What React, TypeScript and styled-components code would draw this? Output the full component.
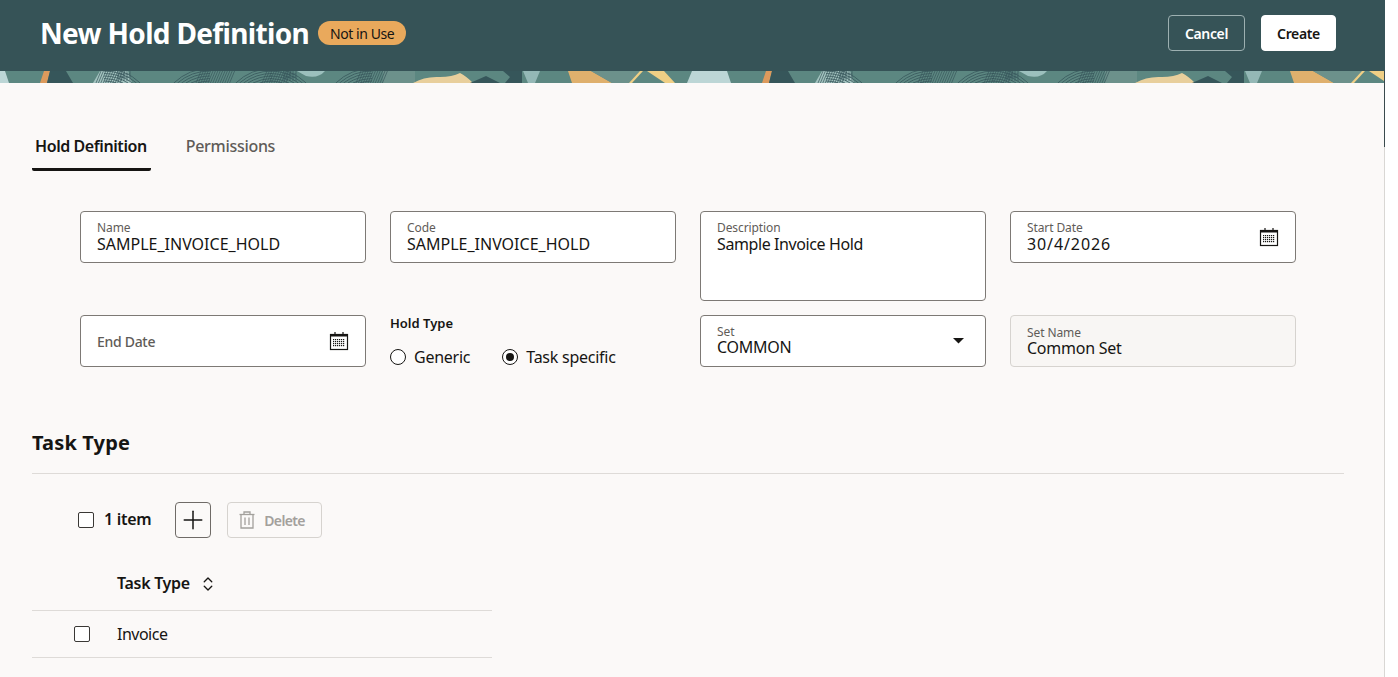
import { createGlobalStyle, styled } from 'styled-components';
import { ChevronsUpDown, Plus } from 'lucide-react';

const GlobalStyle = createGlobalStyle`
  html, body {
    margin: 0;
    background: #ffffff;
  }
  body {
    font-family: 'Noto Sans', 'Liberation Sans', sans-serif;
    color: #161513;
  }
`;

const Page = styled.div`
  position: relative;
  width: 1385px;
  height: 677px;
  overflow: hidden;
  background: #fbf9f8;
`;

const ScrollThumb = styled.div`
  position: absolute;
  top: 71px;
  right: 0;
  width: 1px;
  height: 76px;
  background: #3a4a4d;
`;

const ScrollTrack = styled.div`
  position: absolute;
  top: 147px;
  right: 0;
  bottom: 0;
  width: 1px;
  background: #d9d7d4;
`;

const Header = styled.header`
  height: 71px;
  box-sizing: border-box;
  padding: 15px 49px 0 40px;
  display: flex;
  justify-content: space-between;
  align-items: flex-start;
  background: #365357;
`;

const TitleGroup = styled.div`
  display: flex;
  align-items: center;
  gap: 9px;
  height: 36px;
`;

const Title = styled.h1`
  margin: 0;
  font-size: 28px;
  line-height: 36px;
  font-weight: 700;
  color: #ffffff;
  letter-spacing: -0.66px;
`;

const Badge = styled.span`
  height: 24px;
  padding: 0 12px;
  display: flex;
  align-items: center;
  border-radius: 12px;
  background: #e9a95c;
  color: #161513;
  font-size: 14px;
  letter-spacing: -0.45px;
`;

const HeaderActions = styled.div`
  display: flex;
  gap: 16px;
`;

const HeaderButton = styled.button<{ $primary?: boolean }>`
  height: 36px;
  width: ${(p) => (p.$primary ? '75px' : '77px')};
  padding: 0;
  border-radius: 4px;
  border: 1px solid ${(p) => (p.$primary ? '#ffffff' : '#9db0b1')};
  background: ${(p) => (p.$primary ? '#ffffff' : 'transparent')};
  color: ${(p) => (p.$primary ? '#161513' : '#ffffff')};
  font-family: inherit;
  font-size: 14px;
  font-weight: 600;
  letter-spacing: -0.35px;
`;

const BannerStrip = styled.svg`
  display: block;
  width: 100%;
  height: 12px;
`;

const TabBar = styled.nav`
  display: flex;
  gap: 32px;
  margin: 38px 0 0 32px;
`;

const Tab = styled.div<{ $active?: boolean }>`
  height: 50px;
  box-sizing: border-box;
  padding: 2px 4px 0 3px;
  display: flex;
  align-items: center;
  font-size: 16px;
  font-weight: ${(p) => (p.$active ? 600 : 500)};
  letter-spacing: ${(p) => (p.$active ? '-0.42px' : '-0.3px')};
  color: ${(p) => (p.$active ? '#161513' : '#5f5c58')};
  border-bottom: 3px solid ${(p) => (p.$active ? '#161513' : 'transparent')};
  border-bottom-left-radius: 2px;
  border-bottom-right-radius: 2px;
`;

const FormGrid = styled.section`
  display: grid;
  grid-template-columns: repeat(4, 286px);
  column-gap: 24px;
  row-gap: 14px;
  margin: 40px 0 0 80px;
  align-items: start;
`;

const Field = styled.div<{ $tall?: boolean; $disabled?: boolean }>`
  position: relative;
  height: ${(p) => (p.$tall ? '90px' : '52px')};
  box-sizing: border-box;
  padding: ${(p) => (p.$disabled ? '9px' : '8px')} 16px 0;
  border-radius: 4px;
  border: 1px solid ${(p) => (p.$disabled ? '#d6d3cf' : '#7d7975')};
  background: ${(p) => (p.$disabled ? '#f8f6f4' : '#ffffff')};
  display: flex;
  flex-direction: column;
`;

const FieldLabel = styled.span`
  font-size: 12px;
  line-height: 16px;
  color: #5f5c58;
  letter-spacing: -0.1px;
`;

const FieldValue = styled.span<{ $spacing?: number; $lift?: boolean }>`
  margin-top: ${(p) => (p.$lift ? '-1px' : '0')};
  font-size: 16px;
  line-height: 16px;
  color: #161513;
  letter-spacing: ${(p) => p.$spacing ?? -0.25}px;
`;

const Placeholder = styled.span`
  height: 100%;
  display: flex;
  align-items: center;
  margin-top: -4px;
  font-size: 14px;
  font-weight: 500;
  color: #5f5c58;
  letter-spacing: -0.3px;
`;

const FieldIcon = styled.span<{ $right?: number }>`
  position: absolute;
  right: ${(p) => p.$right ?? 15}px;
  top: 50%;
  transform: translateY(-50%);
  display: flex;
`;

const RadioField = styled.div`
  height: 52px;
  position: relative;
`;

const GroupLabel = styled.div`
  font-size: 13px;
  line-height: 16px;
  font-weight: 600;
  letter-spacing: 0;
`;

const RadioRow = styled.div`
  display: flex;
  gap: 32px;
  margin-top: 14px;
`;

const RadioOption = styled.label`
  display: flex;
  align-items: center;
  gap: 8px;
  height: 24px;
  font-size: 16px;
  letter-spacing: -0.25px;
`;

const RadioDot = styled.span<{ $checked?: boolean }>`
  width: 16px;
  height: 16px;
  box-sizing: border-box;
  border-radius: 50%;
  border: 1px solid #161513;
  background: #ffffff;
  display: flex;
  align-items: center;
  justify-content: center;
  &::after {
    content: '';
    width: 8px;
    height: 8px;
    border-radius: 50%;
    background: ${(p) => (p.$checked ? '#161513' : 'transparent')};
  }
`;

const Section = styled.section`
  margin: 62px 41px 0 32px;
`;

const SectionTitle = styled.h2`
  margin: 0;
  padding-bottom: 16px;
  font-size: 20px;
  line-height: 28px;
  font-weight: 700;
  letter-spacing: 0.15px;
  border-bottom: 1px solid #dedbd8;
`;

const Toolbar = styled.div`
  display: flex;
  align-items: center;
  margin: 28px 0 0 46px;
  height: 36px;
`;

const Checkbox = styled.span`
  display: block;
  flex: none;
  width: 16px;
  height: 16px;
  box-sizing: border-box;
  border-radius: 2px;
  border: 1.5px solid #3a3835;
  background: #ffffff;
`;

const ItemCount = styled.span`
  margin: 0 24px 0 10px;
  padding-bottom: 2px;
  font-size: 16px;
  font-weight: 600;
  letter-spacing: -0.3px;
`;

const IconButton = styled.button`
  width: 36px;
  height: 36px;
  padding: 0;
  display: flex;
  align-items: center;
  justify-content: center;
  border-radius: 4px;
  border: 1px solid #6f6b67;
  background: transparent;
  color: #161513;
`;

const DisabledButton = styled.button`
  width: 95px;
  height: 36px;
  margin-left: 16px;
  padding: 0 0 0 11px;
  box-sizing: border-box;
  display: flex;
  align-items: center;
  gap: 9px;
  border-radius: 4px;
  border: 1px solid #d6d3cf;
  background: transparent;
  color: #a3a09c;
  font-family: inherit;
  font-size: 14px;
  font-weight: 600;
  letter-spacing: -0.65px;
`;

const Table = styled.div`
  width: 460px;
`;

const HeaderRow = styled.div`
  height: 73px;
  box-sizing: border-box;
  padding: 30px 0 0 85px;
  display: flex;
  align-items: flex-start;
  gap: 9px;
  border-bottom: 1px solid #dedbd8;
`;

const HeaderCell = styled.span`
  font-size: 16px;
  line-height: 30px;
  font-weight: 600;
  letter-spacing: -0.3px;
`;

const SortIcon = styled.span`
  height: 31px;
  display: flex;
  align-items: center;
  color: #161513;
`;

const BodyRow = styled.div`
  height: 47px;
  box-sizing: border-box;
  display: flex;
  align-items: center;
  padding-left: 42px;
  border-bottom: 1px solid #dedbd8;
`;

const BodyCell = styled.span`
  margin-left: 27px;
  font-size: 16px;
  letter-spacing: -0.5px;
`;

const hatchLines = (from: number, to: number, step: number) => {
  const lines = [];
  for (let x = from; x < to; x += step) lines.push(x);
  return lines;
};

const ARC_CY = 50;
const ARC_RADII = [40, 42.5, 45, 47.5, 50, 52.5];

// quarter of a ring, from the bottom edge of the strip up to its crown
const arcPath = (cx: number, r: number, side: 'left' | 'right') => {
  const dx = Math.sqrt(r * r - (ARC_CY - 12) * (ARC_CY - 12));
  const x0 = side === 'left' ? cx - dx : cx + dx;
  const sweep = side === 'left' ? 1 : 0;
  return `M${x0.toFixed(1)} 12A${r} ${r} 0 0 ${sweep} ${cx} ${ARC_CY - r}`;
};

function BannerTile() {
  return (
    <>
      <rect width="722" height="12" fill="#5c8781" />
      <polygon points="692,0 722,0 722,12 687,12" fill="#bcd6d6" />
      <polygon points="0,0 5,0 9,12 0,12" fill="#bcd6d6" />
      <polygon points="44,0 50,0 47,12 40,12" fill="#dc9a5c" />
      <polygon points="50,0 66,0 73,12 47,12" fill="#36565a" />
      <polygon points="100,0 128,0 132,12 93,12" fill="#a3c3bf" />
      <path d="M297,0 H325 Q318,8 306,5 Z" fill="#9cc0bd" />
      <rect x="383" y="0" width="32" height="12" fill="#6c918b" />
      <path d="M413,12 Q425,5 440,6 Q452,6 460,2 Q466,5 473,12 Z" fill="#e8cf9c" />
      <path d="M470,12 L486,5 L500,12 Z" fill="#36565a" />
      <polygon points="503,0 522,0 522,12 505,12 510,6" fill="#36565a" />
      <polygon points="523,0 540,0 535,12 528,12" fill="#94b8b6" />
      <polygon points="568,0 591,0 612,12 572,12" fill="#dfb06d" />
      <polygon points="591,0 642,0 630,12 612,12" fill="#6c918b" />
      <polygon points="640,0 643,0 632,12 629,12" fill="#efcf85" />
      <polygon points="647,0 664,0 675,12 665,12" fill="#efcf85" />
      {[...hatchLines(96, 122, 2.4), ...hatchLines(196, 232, 2.4), ...hatchLines(262, 288, 2.4), ...hatchLines(356, 384, 2.4)].map((x) => (
        <line key={x} x1={x + 5} y1="0" x2={x} y2="12" stroke="#36565a" strokeWidth="0.7" />
      ))}
      {[118, 284].map((gx) =>
        [0, 3, 6, 9, 12].map((o) => (
          <line key={`${gx}-${o}`} x1={gx + o} y1="0" x2={gx + o} y2="10" stroke="#36565a" strokeWidth="0.7" />
        )),
      )}
      <path d="M118 3H130M118 6H130M284 3H296M284 6H296" stroke="#36565a" strokeWidth="0.7" />
      {[210, 272, 372].map((cx) =>
        ARC_RADII.map((r) => (
          <path key={`${cx}-${r}`} d={arcPath(cx, r, 'left')} fill="none" stroke="#36565a" strokeWidth="0.8" />
        )),
      )}
      {[104, 270].map((cx) =>
        ARC_RADII.map((r) => (
          <path key={`${cx}-${r}`} d={arcPath(cx, r, 'right')} fill="none" stroke="#36565a" strokeWidth="0.8" />
        )),
      )}
    </>
  );
}

function Banner() {
  return (
    <BannerStrip aria-hidden="true">
      <defs>
        <pattern id="holdBanner" width="722" height="12" patternUnits="userSpaceOnUse">
          <BannerTile />
        </pattern>
      </defs>
      <rect width="100%" height="12" fill="url(#holdBanner)" />
    </BannerStrip>
  );
}

function CalendarIcon() {
  const dots = [];
  for (let row = 0; row < 4; row++) {
    for (let col = 0; col < 6; col++) {
      dots.push(<rect key={`${row}-${col}`} x={5 + col * 2} y={9 + row * 2} width="1.2" height="1.2" fill="#161513" />);
    }
  }
  return (
    <svg width="22" height="22" viewBox="0 0 22 22" fill="none">
      <rect x="2.5" y="4.5" width="17" height="15" stroke="#161513" strokeWidth="1.2" />
      <line x1="2.5" y1="5.5" x2="19.5" y2="5.5" stroke="#161513" strokeWidth="2" />
      <line x1="7" y1="2" x2="7" y2="6" stroke="#161513" strokeWidth="1.2" />
      <line x1="15" y1="2" x2="15" y2="6" stroke="#161513" strokeWidth="1.2" />
      {dots}
    </svg>
  );
}

function CaretIcon() {
  return (
    <svg width="11" height="6" viewBox="0 0 11 6">
      <polygon points="0,0 11,0 5.5,5.5" fill="#161513" />
    </svg>
  );
}

function TrashIcon() {
  return (
    <svg width="16" height="18" viewBox="0 0 16 18" fill="none" stroke="#a3a09c" strokeWidth="1.3">
      <path d="M0.5 3.5H15.5" />
      <path d="M5 3.5V1H11V3.5" />
      <path d="M2 3.5V17H14V3.5" />
      <path d="M6 6.5V14" />
      <path d="M10 6.5V14" />
    </svg>
  );
}

export default function App() {
  return (
    <>
      <GlobalStyle />
      <Page>
        <Header>
          <TitleGroup>
            <Title>New Hold Definition</Title>
            <Badge>Not in Use</Badge>
          </TitleGroup>
          <HeaderActions>
            <HeaderButton>Cancel</HeaderButton>
            <HeaderButton $primary>Create</HeaderButton>
          </HeaderActions>
        </Header>
        <Banner />
        <TabBar>
          <Tab $active>Hold Definition</Tab>
          <Tab>Permissions</Tab>
        </TabBar>
        <FormGrid>
          <Field>
            <FieldLabel>Name</FieldLabel>
            <FieldValue $spacing={0}>SAMPLE_INVOICE_HOLD</FieldValue>
          </Field>
          <Field>
            <FieldLabel>Code</FieldLabel>
            <FieldValue $spacing={0}>SAMPLE_INVOICE_HOLD</FieldValue>
          </Field>
          <Field $tall>
            <FieldLabel>Description</FieldLabel>
            <FieldValue $spacing={-0.4}>Sample Invoice Hold</FieldValue>
          </Field>
          <Field>
            <FieldLabel>Start Date</FieldLabel>
            <FieldValue $spacing={0.9}>30/4/2026</FieldValue>
            <FieldIcon>
              <CalendarIcon />
            </FieldIcon>
          </Field>
          <Field>
            <Placeholder>End Date</Placeholder>
            <FieldIcon>
              <CalendarIcon />
            </FieldIcon>
          </Field>
          <RadioField>
            <GroupLabel>Hold Type</GroupLabel>
            <RadioRow>
              <RadioOption>
                <RadioDot />
                Generic
              </RadioOption>
              <RadioOption>
                <RadioDot $checked />
                Task specific
              </RadioOption>
            </RadioRow>
          </RadioField>
          <Field>
            <FieldLabel>Set</FieldLabel>
            <FieldValue $lift>COMMON</FieldValue>
            <FieldIcon $right={21}>
              <CaretIcon />
            </FieldIcon>
          </Field>
          <Field $disabled>
            <FieldLabel>Set Name</FieldLabel>
            <FieldValue $lift>Common Set</FieldValue>
          </Field>
        </FormGrid>
        <Section>
          <SectionTitle>Task Type</SectionTitle>
          <Toolbar>
            <Checkbox />
            <ItemCount>1 item</ItemCount>
            <IconButton>
              <Plus size={30} strokeWidth={1.2} />
            </IconButton>
            <DisabledButton>
              <TrashIcon />
              Delete
            </DisabledButton>
          </Toolbar>
          <Table>
            <HeaderRow>
              <HeaderCell>Task Type</HeaderCell>
              <SortIcon>
                <ChevronsUpDown size={18} strokeWidth={1.8} />
              </SortIcon>
            </HeaderRow>
            <BodyRow>
              <Checkbox />
              <BodyCell>Invoice</BodyCell>
            </BodyRow>
          </Table>
        </Section>
        <ScrollThumb />
        <ScrollTrack />
      </Page>
    </>
  );
}
